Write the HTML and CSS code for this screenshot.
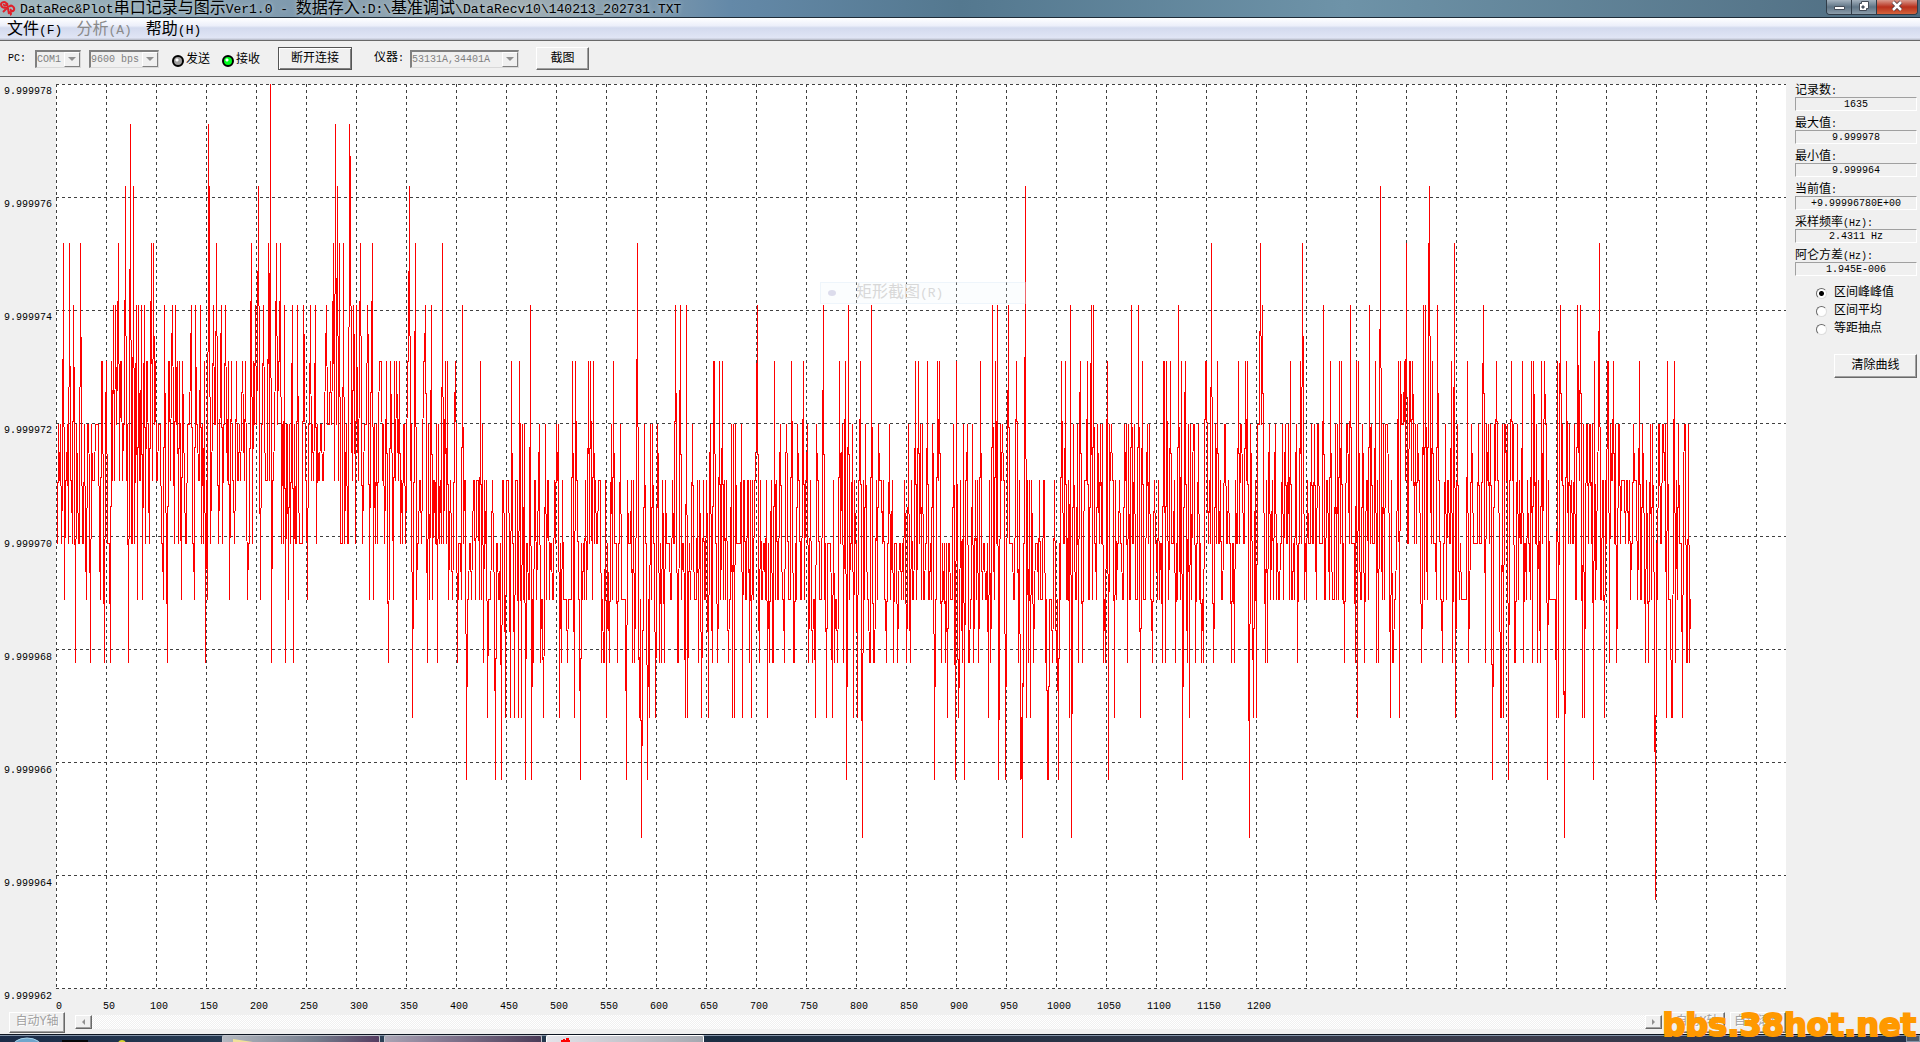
FILE: index.html
```
<!DOCTYPE html>
<html lang="zh-CN">
<head>
    <meta charset="UTF-8">
    <meta name="viewport" content="width=device-width, initial-scale=1.0">
    <title>DataRec&amp;Plot</title>
    <link rel="stylesheet" href="styles.css">
</head>
<body>
    <header class="titlebar">
        <svg class="logo" viewBox="0 0 16 16" width="16" height="16" aria-hidden="true">
            <path d="M7 8C4 8 1 7 1 4.500C1 2 5 1 6.500 3.500C7.500 6 3 6 4 4M7 8L3 12M7 3L9 14M9 7C11 4 15 7 14 10C13 12 10 11 11 9M9 12C11 12 12 14 10 15" fill="none" stroke="#e0202a" stroke-width="2"/>
        </svg>
        <h1 class="caption">DataRec&amp;Plot<span class="cn">串口记录与图示</span>Ver1.0 - <span class="cn">数据存入</span>:D:\<span class="cn">基准调试</span>\DataRecv10\140213_202731.TXT</h1>
        <div class="window-buttons">
            <button class="win-btn" aria-label="最小化">
                <svg viewBox="0 0 24 14" width="24" height="14"><path d="M7.500 6.500h10v3h-10z" fill="#fff" stroke="#444c58"/></svg>
            </button>
            <button class="win-btn" aria-label="还原">
                <svg viewBox="0 0 24 14" width="24" height="14"><path d="M9.500 1.500h7v7h-2v2h-7v-7h2z" fill="#fff" stroke="#444c58"/><path d="M10 6h2v2h-2z" fill="#5c6b7a" stroke="#444c58"/></svg>
            </button>
            <button class="win-btn close" aria-label="关闭">
                <svg viewBox="0 0 40 14" width="40" height="14"><path d="M16 2l8 8M24 2l-8 8" stroke="#4c3a40" stroke-width="4"/><path d="M16 2l8 8M24 2l-8 8" stroke="#fff" stroke-width="2.500"/></svg>
            </button>
        </div>
    </header>

    <nav class="menubar">
        <a href="#"><span class="cn">文件</span>(F)</a>
        <a href="#" class="off"><span class="cn">分析</span>(A)</a>
        <a href="#"><span class="cn">帮助</span>(H)</a>
    </nav>

    <div class="toolbar">
        <label for="port">PC:</label>
        <div class="combo port">
            <select id="port" disabled><option>COM1</option></select>
            <span class="drop"></span>
        </div>
        <div class="combo baud">
            <select aria-label="波特率" disabled><option>9600 bps</option></select>
            <span class="drop"></span>
        </div>
        <div class="led"><i></i><span class="cn">发送</span></div>
        <div class="led on"><i></i><span class="cn">接收</span></div>
        <button class="btn default connect">断开连接</button>
        <label for="meter" class="meter-label"><span class="cn">仪器</span>:</label>
        <div class="combo meter">
            <select id="meter" disabled><option>53131A,34401A</option></select>
            <span class="drop"></span>
        </div>
        <button class="btn capture">截图</button>
    </div>

    <main class="main">
        <div class="y-axis" id="yAxis"></div>
        <div class="plot" id="plot">
            <svg id="chart" width="100%" height="100%"></svg>
            <div class="ghost-menu"><i></i><span><span class="cn">矩形截图</span>(R)</span></div>
        </div>
        <aside class="side">
            <div class="stat"><label for="count"><span class="cn">记录数</span>:</label><output id="count">1635</output></div>
            <div class="stat"><label for="max"><span class="cn">最大值</span>:</label><output id="max">9.999978</output></div>
            <div class="stat"><label for="min"><span class="cn">最小值</span>:</label><output id="min">9.999964</output></div>
            <div class="stat"><label for="now"><span class="cn">当前值</span>:</label><output id="now">+9.99996780E+00</output></div>
            <div class="stat"><label for="rate"><span class="cn">采样频率</span>(Hz):</label><output id="rate">2.4311 Hz</output></div>
            <div class="stat"><label for="allan"><span class="cn">阿仑方差</span>(Hz):</label><output id="allan">1.945E-006</output></div>
            <div class="modes">
                <label><input type="radio" name="mode" checked>区间峰峰值</label>
                <label><input type="radio" name="mode">区间平均</label>
                <label><input type="radio" name="mode">等距抽点</label>
            </div>
            <button class="btn clear">清除曲线</button>
        </aside>
        <div class="x-axis" id="xAxis"></div>
        <div class="scroll-row">
            <button class="btn auto" disabled><span class="cn">自动</span>Y<span class="cn">轴</span></button>
            <div class="scrollbar">
                <button class="arrow left" aria-label="向左" disabled></button>
                <div class="track"></div>
                <button class="arrow right" aria-label="向右" disabled></button>
            </div>
            <button class="btn auto" disabled><span class="cn">自动</span>X<span class="cn">轴</span></button>
            <button class="btn auto" disabled><span class="cn">自动滚动</span></button>
        </div>
    </main>

    <footer class="taskbar">
        <div class="start">
            <svg viewBox="0 0 222 8" width="222" height="8" aria-hidden="true">
                <ellipse cx="27" cy="13" rx="16" ry="11" fill="#6fa6cc" stroke="#a9d2ea"/>
                <path d="M62 4h26v4H62z" fill="#050607"/>
                <circle cx="122" cy="8" r="4" fill="#d8d430"/>
            </svg>
        </div>
        <div class="task folder">
            <svg viewBox="0 0 30 7" width="30" height="7" aria-hidden="true"><path d="M0 3l20 3v1H0z" fill="#f0e19a"/></svg>
        </div>
        <div class="task"></div>
        <div class="task active">
            <svg viewBox="0 0 10 6" width="10" height="6" aria-hidden="true"><path d="M0 4h2V3h2v1h1V2h3v2h1v2H0z" fill="#f00"/></svg>
        </div>
        <div class="desktop"></div>
    </footer>

    <div class="watermark">bbs.38hot.net</div>
    <script src="script.js"></script>
</body>
</html>
```
FILE: styles.css
```
* {
    box-sizing: border-box;
    margin: 0;
    padding: 0;
}

body {
    display: flex;
    flex-direction: column;
    height: 100vh;
    overflow: hidden;
    position: relative;
    background: #f0f0f0;
    color: #000;
    font-family: "Liberation Mono", "Noto Sans CJK SC", monospace;
    font-size: 10px;
    line-height: 13px;
}

button,
select {
    font-family: inherit;
    font-size: 10px;
    color: inherit;
}

.cn {
    font-size: 12px;
}

/* title bar */
.titlebar {
    display: flex;
    height: 18px;
    padding-right: 2px;
    background: linear-gradient(to right, #a3b8be, #7f9aae 15%, #a3b0b4 27%, #6489a8 38%, #54788f 50%, #6e93a8 70%, #4e6c80);
    border-bottom: 1px solid #1e2c38;
}

.logo {
    flex: none;
    margin-right: 4px;
}

.caption {
    flex: 1;
    font-size: 13px;
    font-weight: normal;
    line-height: 19px;
    white-space: nowrap;
    text-shadow: 0 0 4px #cdd9de;
}

.caption .cn,
.menubar .cn {
    font-size: 16px;
}

.window-buttons {
    display: flex;
    height: 15px;
    border: 1px solid #303c48;
    border-top: 0;
    border-radius: 0 0 4px 4px;
    overflow: hidden;
}

.win-btn {
    display: flex;
    border: 0;
    border-right: 1px solid #303c48;
    background: linear-gradient(#a4b2be, #5f7485 50%, #8c9daa);
}

.win-btn.close {
    border-right: 0;
    background: linear-gradient(#d99a8d, #b8301c 50%, #d4643c);
}

/* menu */
.menubar {
    display: flex;
    gap: 14px;
    height: 22px;
    padding-left: 7px;
    background: linear-gradient(#fff, #eceffa 35%, #d3daee 45%, #e0e5f5 90%, #b4b8c4);
    font-size: 13px;
    line-height: 24px;
}

.menubar a {
    color: #000;
    text-decoration: none;
}

.menubar .off {
    color: #8a8a8a;
}

/* toolbar */
.toolbar {
    display: flex;
    align-items: center;
    height: 37px;
    padding: 0 8px;
    border-top: 1px solid #696969;
    border-bottom: 1px solid #696969;
}

.combo {
    display: flex;
    height: 18px;
    border: 1px solid #808080;
    border-width: 2px 1px 1px 2px;
    border-color: #808080 #d8d8d8 #d8d8d8 #808080;
}

.combo select {
    flex: 1;
    min-width: 0;
    appearance: none;
    border: 0;
    background: #f0f0f0;
    color: #808080;
    opacity: 1;
}

.drop {
    display: flex;
    align-items: center;
    justify-content: center;
    width: 16px;
    border: 1px solid;
    border-color: #fff #808080 #808080 #fff;
}

.drop::before {
    content: "";
    border: 4px solid transparent;
    border-top-color: #909090;
    border-bottom: 0;
}

.port {
    width: 46px;
    margin: 0 8px 0 9px;
}

.baud {
    width: 70px;
    margin-right: 13px;
}

.meter {
    width: 109px;
    margin: 0 17px 0 6px;
}

.led {
    display: flex;
    align-items: center;
    gap: 2px;
    margin-right: 12px;
    padding-top: 4px;
}

.led i {
    width: 12px;
    height: 12px;
    border: 2px solid #000;
    border-radius: 50%;
    background: radial-gradient(circle at 3px 3px, #fff 1px, #a0a0a0 2px);
}

.led.on i {
    background: radial-gradient(circle at 3px 3px, #fff 1px, #00ff1e 2px);
}

.btn {
    border: 1px solid;
    border-color: #fff #696969 #696969 #fff;
    box-shadow: inset -1px -1px #a0a0a0;
    background: #f0f0f0;
    font-size: 12px;
    line-height: 18px;
    white-space: nowrap;
}

.btn.default {
    border-color: #555;
    box-shadow: inset 1px 1px #fff, inset -1px -1px #808080;
}

.connect {
    width: 74px;
    height: 23px;
    margin: 0 22px 0 6px;
}

.capture {
    width: 53px;
    height: 23px;
}

/* plot area */
.main {
    flex: 1;
    min-height: 0;
    display: grid;
    grid-template-columns: 56px 1fr 134px;
    grid-template-rows: 1fr 22px 23px;
    padding-top: 7px;
}

.y-axis {
    display: flex;
    flex-direction: column;
    justify-content: space-between;
    margin: 1px 0 -14px;
    padding-left: 4px;
}

.plot {
    position: relative;
    min-height: 0;
    background: #fff;
}

.plot svg {
    display: block;
    position: absolute;
}

.grid-line {
    stroke: #404040;
    stroke-dasharray: 3;
    shape-rendering: crispEdges;
}

.curve {
    fill: none;
    stroke: #f00;
    shape-rendering: crispEdges;
}

.ghost-menu {
    position: absolute;
    top: 198px;
    left: 764px;
    display: flex;
    align-items: center;
    gap: 20px;
    width: 206px;
    height: 22px;
    padding-left: 7px;
    border: 1px solid rgba(210, 230, 245, 0.3);
    background: rgba(235, 244, 252, 0.2);
    color: #d8d8d8;
    font-size: 13px;
}

.ghost-menu .cn {
    font-size: 16px;
}

.ghost-menu i {
    width: 8px;
    height: 6px;
    border-radius: 50%;
    background: #dcdcec;
}

.x-axis {
    grid-column: 2;
    display: flex;
    padding-top: 11px;
    overflow: hidden;
}

.x-axis span {
    flex: none;
    width: 50px;
    margin-left: -22px;
    margin-right: 22px;
    text-align: center;
}

/* right panel */
.side {
    grid-column: 3;
    grid-row: 1 / 4;
    display: flex;
    flex-direction: column;
    padding: 0 3px 0 9px;
}

.stat {
    height: 33px;
}

.stat label,
.stat output {
    display: block;
}

.stat label {
    height: 13px;
    line-height: 15px;
}

.stat output {
    height: 14px;
    border: 1px solid;
    border-color: #a0a0a0 #fff #fff #a0a0a0;
    text-align: center;
}

.modes {
    display: flex;
    flex-direction: column;
    gap: 5px;
    padding: 5px 0 18px 21px;
    font-size: 12px;
}

.modes label {
    display: flex;
    align-items: center;
    gap: 7px;
}

.modes input {
    appearance: none;
    width: 11px;
    height: 11px;
    border: 1px solid;
    border-color: #696969 #ddd #ddd #696969;
    border-radius: 50%;
    background: #fff;
}

.modes input:checked {
    background: radial-gradient(circle, #000 2px, #fff 3px);
}

.clear {
    align-self: flex-end;
    width: 83px;
    height: 24px;
}

/* bottom controls */
.scroll-row {
    grid-column: 1 / 3;
    display: flex;
    align-items: center;
    gap: 5px;
    padding: 0 0 1px 9px;
}

.auto {
    width: 56px;
    height: 21px;
    color: #a0a0a0;
    text-shadow: 1px 1px #fff;
}

.scrollbar {
    flex: 1;
    display: flex;
    height: 14px;
    margin: 0 2px 0 5px;
}

.track {
    flex: 1;
    background: repeating-conic-gradient(#fff 0 25%, #f0f0f0 0 50%) 0 0 / 2px 2px;
}

.arrow {
    display: flex;
    align-items: center;
    justify-content: center;
    width: 17px;
    border: 1px solid;
    border-color: #fff #696969 #696969 #fff;
    box-shadow: inset -1px -1px #a0a0a0;
    background: #f0f0f0;
}

.arrow::before {
    content: "";
    border: 3px solid transparent;
}

.arrow.left::before {
    border-right-color: #909090;
    border-left: 0;
}

.arrow.right::before {
    border-left-color: #909090;
    border-right: 0;
}

/* taskbar */
.taskbar {
    flex: none;
    display: flex;
    gap: 4px;
    height: 8px;
    overflow: hidden;
    border-top: 1px solid #0c1420;
    background: linear-gradient(to right, #1b2c48, #2d4258 18%, #1b2d42 38%, #3c3c4c 80%, #22304a);
    box-shadow: inset 0 1px #8494a8;
}

.start {
    width: 218px;
}

.task {
    width: 158px;
    height: 7px;
    padding-left: 10px;
    border: 1px solid #c0c4cc;
    border-bottom: 0;
    border-radius: 2px 2px 0 0;
    background: linear-gradient(to right, #a9a4b4, #8b8098 30%, #4b3c58);
}

.task svg {
    display: block;
}

.task.folder {
    background: linear-gradient(to right, #b4b8c0, #747c8c 60%, #543c60);
}

.task.active {
    padding-left: 14px;
    border-color: #fff;
    background: linear-gradient(to right, #e4e4ea, #a4a8b0);
}

.desktop {
    width: 14px;
    margin-left: auto;
    border: 1px solid #8494a8;
    background: #4c5868;
}

.watermark {
    position: absolute;
    right: 4px;
    bottom: 3px;
    color: #ff9900;
    font-family: "DejaVu Sans", sans-serif;
    font-size: 32px;
    font-weight: bold;
    line-height: 28px;
    -webkit-text-stroke: 2px #ff9900;
}
```
FILE: script.js
```
const SVG = 'http://www.w3.org/2000/svg';
const COUNT = 1635;
const FULL = 904;

// offset from the top of the plot for each reading level
const LEVELS = [0, 40, 102, 159, 221, 277, 340, 396, 459, 515, 578, 633, 695, 753, 815];

// sample numbers that reach each level
const marks = {
    0: [214],
    1: [74, 152, 279, 293],
    2: [69, 77, 202, 281, 294, 353, 969, 1324, 1373],
    3: [7, 13, 24, 62, 95, 97, 153, 160, 195, 212, 220, 224, 277, 283, 287, 304, 316, 359, 386,
        581, 1155, 1204, 1246, 1350, 1398, 1543],
    4: [17, 57, 59, 80, 82, 85, 88, 108, 116, 119, 135, 139, 144, 157, 165, 169, 199, 207, 228, 236, 241,
        247, 254, 259, 270, 297, 300, 311, 369, 375, 406, 474, 619, 624, 630, 701, 767, 792, 815,
        936, 941, 952, 1014, 1035, 1037, 1075, 1082, 1122, 1206, 1267, 1294, 1313, 1367, 1369, 1372, 1381,
        1427, 1504, 1521, 1524],
    5: [424, 455, 463, 516, 519, 532, 534, 537, 557, 657, 658, 663, 666, 718, 735, 747, 783, 789, 804, 859,
        862, 871, 881, 883, 900, 924, 939, 960, 1005, 1009, 1024, 1031, 1051, 1086, 1107, 1108, 1110, 1114,
        1125, 1129, 1149, 1150, 1161, 1182, 1189, 1191, 1234, 1244, 1274, 1283, 1285, 1300, 1302, 1319,
        1342, 1344, 1348, 1353, 1354, 1356, 1376, 1395, 1411, 1440, 1455, 1466, 1475, 1477, 1485, 1488,
        1501, 1510, 1538, 1551, 1552, 1557, 1583, 1611, 1618],
    6: [426, 466, 468, 483, 489, 500, 502, 555, 564, 588, 594, 596, 601, 636, 654, 675, 677, 679, 685, 700,
        724, 730, 741, 751, 760, 786, 796, 809, 822, 833, 852, 864, 866, 876, 897, 907, 911, 916, 944, 946,
        1017, 1021, 1044, 1046, 1053, 1068, 1072, 1078, 1091, 1093, 1134, 1138, 1142, 1159, 1169, 1213,
        1219, 1226, 1229, 1255, 1258, 1261, 1279, 1331, 1359, 1401, 1415, 1422, 1426, 1430, 1446, 1449,
        1451, 1461, 1480, 1503, 1506, 1522, 1527, 1530, 1534, 1542, 1554, 1562, 1563, 1577, 1586, 1602,
        1603, 1607, 1609, 1632],
    9: [8, 30, 44, 81, 86, 107, 125, 138, 151, 173, 191, 204, 232, 251, 313, 317, 337, 360, 373, 376, 392,
        396, 415, 419, 425],
    10: [19, 34, 48, 54, 72, 111, 149, 215, 229, 237, 332, 371, 381, 401, 427, 477, 484, 505, 511, 545, 547,
        548, 553, 561, 576, 578, 603, 605, 608, 621, 642, 656, 661, 672, 703, 713, 716, 728, 738, 752, 756,
        778, 781, 787, 814, 818, 830, 837, 841, 850, 854, 885, 889, 906, 913, 917, 922, 934, 943, 962, 972,
        977, 989, 996, 1000, 1022, 1026, 1047, 1049, 1071, 1096, 1106, 1109, 1119, 1131, 1139, 1145, 1147,
        1157, 1175, 1178, 1209, 1211, 1241, 1288, 1299, 1308, 1320, 1322, 1336, 1337, 1365, 1386, 1396,
        1412, 1429, 1458, 1459, 1467, 1476, 1481, 1484, 1553, 1560, 1589, 1592, 1619, 1630, 1631, 1633],
    11: [356, 431, 449, 454, 458, 462, 465, 487, 503, 518, 550, 583, 593, 599, 629, 631, 645, 652, 676, 678,
        686, 695, 711, 759, 770, 776, 797, 801, 891, 902, 932, 965, 970, 974, 1013, 1058, 1084, 1133, 1197,
        1200, 1301, 1334, 1343, 1399, 1444, 1445, 1447, 1500, 1502, 1526, 1528, 1548, 1610, 1615, 1616, 1626],
    12: [410, 439, 445, 469, 475, 524, 570, 591, 790, 878, 899, 908, 942, 949, 964, 991, 992, 1002, 1052,
        1126, 1436, 1452, 1491, 1537],
    13: [585, 806, 966, 1015, 1193, 1508],
    14: [1599]
};

let seed = 7;
function random() {
    seed = (seed * 16807) % 2147483647;
    return seed / 2147483647;
}

// the ordinary readings between the marked ones
function reading(i, last) {
    if (random() < 0.12 && last >= 6 && last <= 9) return last;
    const r = random();
    if (i < 400) return r < 0.2 ? 5 : r < 0.5 ? 6 : r < 0.75 ? 7 : 8;
    if (i > 1000) return r < 0.12 ? 6 : r < 0.4 ? 7 : r < 0.7 ? 8 : 9;
    return r < 0.3 ? 7 : r < 0.62 ? 8 : r < 0.97 ? 9 : 10;
}

const samples = [8];
for (let i = 1; i < COUNT; i++) {
    samples.push(reading(i, samples[i - 1]));
}
for (const level in marks) {
    marks[level].forEach(i => samples[i] = Number(level));
}

const plot = document.getElementById('plot');
const chart = document.getElementById('chart');

function add(tag, attrs) {
    const el = document.createElementNS(SVG, tag);
    for (const name in attrs) el.setAttribute(name, attrs[name]);
    chart.appendChild(el);
}

function draw() {
    const w = plot.clientWidth;
    const h = plot.clientHeight - 1;
    chart.innerHTML = '';
    for (let x = 0; x < w; x += 50) {
        add('line', { class: 'grid-line', x1: x + 0.5, x2: x + 0.5, y1: 0, y2: h });
    }
    for (let n = 0; n <= 8; n++) {
        const y = Math.round(n * h / 8) + 0.5;
        add('line', { class: 'grid-line', x1: 0, x2: w, y1: y, y2: y });
    }
    const points = samples.map((s, i) => (i + 0.5) + ',' + (Math.round(LEVELS[s] * h / FULL) + 0.5));
    add('polyline', { class: 'curve', points: points.join(' ') });
}

for (let n = 78; n >= 62; n -= 2) {
    const label = document.createElement('span');
    label.textContent = '9.9999' + n;
    document.getElementById('yAxis').appendChild(label);
}
for (let n = 0; n <= 1200; n += 50) {
    const label = document.createElement('span');
    label.textContent = n;
    document.getElementById('xAxis').appendChild(label);
}

draw();
window.addEventListener('resize', draw);
```
